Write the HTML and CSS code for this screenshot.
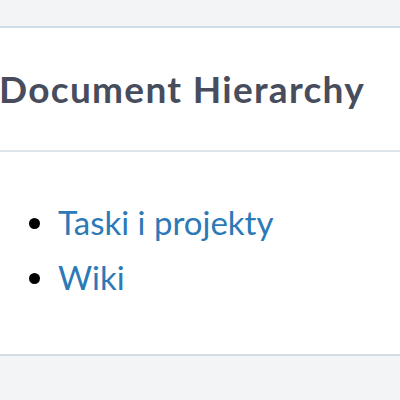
FILE: index.html
```html
<!DOCTYPE html>
<html>
<head>
<meta charset="utf-8">
<link rel="stylesheet" href="styles.css">
</head>
<body>
<div class="top"></div>
<section class="panel">
  <header class="panel-head">
    <h2 class="title">Document Hierarchy</h2>
  </header>
  <div class="panel-body">
    <ul class="tree">
      <li><a href="#">Taski i projekty</a></li>
      <li><a href="#">Wiki</a></li>
    </ul>
  </div>
</section>
<div class="bottom"></div>
</body>
</html>
```
FILE: styles.css
```css
html, body {
  margin: 0;
  padding: 0;
  background: #f3f4f6;
  font-family: Lato, "Open Sans", sans-serif;
  width: 400px;
  height: 400px;
  overflow: hidden;
}
.top {
  height: 26px;
}
.panel {
  background: #ffffff;
  border-top: 2px solid #d3dde6;
  border-bottom: 2px solid #d3dde6;
}
.panel-head {
  height: 122px;
  border-bottom: 2px solid #dde5ec;
  display: flex;
  align-items: center;
}
.title {
  margin: -2px 0 0 -1px;
  font-size: 37px;
  font-weight: 700;
  letter-spacing: 1.3px;
  color: #474d5d;
  line-height: 1;
}
.panel-body {
  height: 202px;
}
.tree {
  margin: 0;
  padding: 43px 0 0 58px;
  font-size: 33px;
  line-height: 55px;
}
.tree a {
  color: #2c79b8;
  text-decoration: none;
}
```
